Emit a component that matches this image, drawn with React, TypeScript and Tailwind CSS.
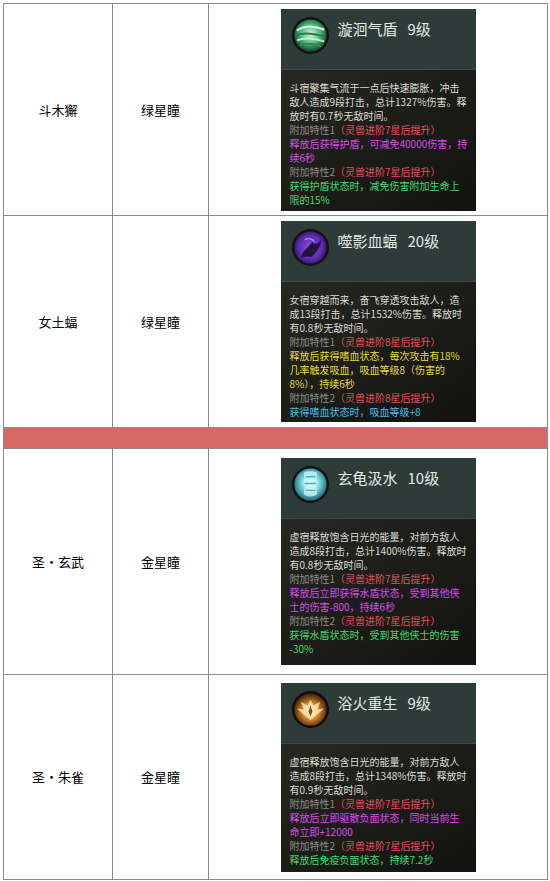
type Seg = [string, string];

const C = {
  txt: "text-[#dcdcd2]",
  lab: "text-[#8e8e84]",
  red: "text-[#e4505e]",
  mag: "text-[#d84ae8]",
  grn: "text-[#3fda6a]",
  yel: "text-[#e8d838]",
  cyn: "text-[#45bbe8]",
};

function SwirlIcon() {
  return (
    <svg width="39" height="39" viewBox="0 0 40 40">
      <defs>
        <radialGradient id="g1" cx="50%" cy="45%" r="55%">
          <stop offset="0%" stopColor="#d6f8e4" />
          <stop offset="55%" stopColor="#4bb878" />
          <stop offset="100%" stopColor="#134528" />
        </radialGradient>
      </defs>
      <circle cx="20" cy="20" r="19" fill="#0d1412" />
      <circle cx="20" cy="20" r="16.5" fill="url(#g1)" />
      <path d="M6 15 C14 9 26 11 34 14" stroke="#eafff2" strokeWidth="2.4" fill="none" opacity="0.85" />
      <path d="M5 20 C14 16 26 19 35 21" stroke="#2a7c4a" strokeWidth="2" fill="none" />
      <path d="M6 25 C15 21 25 24 34 26" stroke="#d8f8e6" strokeWidth="2" fill="none" opacity="0.8" />
      <path d="M9 30 C17 27 24 29 31 31" stroke="#2f8a55" strokeWidth="2" fill="none" />
    </svg>
  );
}

function BatIcon() {
  return (
    <svg width="39" height="39" viewBox="0 0 40 40">
      <defs>
        <radialGradient id="g2" cx="50%" cy="50%" r="55%">
          <stop offset="0%" stopColor="#8a55e0" />
          <stop offset="70%" stopColor="#5a2aa8" />
          <stop offset="100%" stopColor="#2a1055" />
        </radialGradient>
      </defs>
      <circle cx="20" cy="20" r="19" fill="#141016" />
      <circle cx="20" cy="20" r="16.5" fill="url(#g2)" />
      <path d="M10 30 C13 22 18 20 22 14 C24 18 28 16 31 12 C30 20 26 26 20 30 C17 28 13 31 10 30 Z" fill="#24123f" />
      <path d="M14 12 C18 10 22 11 24 14" stroke="#c7a8ff" strokeWidth="1.5" fill="none" opacity="0.7" />
    </svg>
  );
}

function WaterIcon() {
  return (
    <svg width="39" height="39" viewBox="0 0 40 40">
      <defs>
        <radialGradient id="g3" cx="50%" cy="45%" r="55%">
          <stop offset="0%" stopColor="#e8ffff" />
          <stop offset="50%" stopColor="#7fd8e0" />
          <stop offset="100%" stopColor="#1f6a78" />
        </radialGradient>
      </defs>
      <circle cx="20" cy="20" r="19" fill="#0c1416" />
      <circle cx="20" cy="20" r="16.5" fill="url(#g3)" />
      <path d="M13 8 C16 6 24 6 27 8 L26 14 C28 16 28 20 26 22 L27 30 C22 33 17 33 13 30 L14 22 C12 20 12 16 14 14 Z" fill="#c9f6f6" opacity="0.75" />
      <path d="M15 12 L25 12 M14 19 L26 19 M15 26 L25 26" stroke="#4fb0bd" strokeWidth="1.4" />
    </svg>
  );
}

function PhoenixIcon() {
  return (
    <svg width="39" height="39" viewBox="0 0 40 40">
      <defs>
        <radialGradient id="g4" cx="50%" cy="55%" r="55%">
          <stop offset="0%" stopColor="#ffe7a8" />
          <stop offset="45%" stopColor="#d98a2e" />
          <stop offset="100%" stopColor="#3a1c0a" />
        </radialGradient>
      </defs>
      <circle cx="20" cy="20" r="19" fill="#120c08" />
      <circle cx="20" cy="20" r="16.5" fill="url(#g4)" />
      <path d="M20 10 L23 16 L30 12 L27 20 L34 19 L27 25 L20 31 L13 25 L6 19 L13 20 L10 12 L17 16 Z" fill="#fff0c0" opacity="0.75" />
      <path d="M20 16 L22 22 L20 27 L18 22 Z" fill="#8a4a15" />
    </svg>
  );
}

type Card = {
  icon: React.ReactNode;
  title: string;
  level: string;
  lines: Seg[][];
  h: number;
};

type RowData = { name: string; kind: string; h: number; card: Card };

const rows: RowData[] = [
  {
    name: "斗木獬",
    kind: "绿星瞳",
    h: 212,
    card: {
      icon: <SwirlIcon />,
      title: "漩洄气盾",
      level: "9级",
      h: 202,
      lines: [
        [["斗宿聚集气流于一点后快速膨胀，冲击", C.txt]],
        [["敌人造成9段打击，总计1327%伤害。释", C.txt]],
        [["放时有0.7秒无敌时间。", C.txt]],
        [["附加特性1", C.lab], ["（灵兽进阶7星后提升）", C.red]],
        [["释放后获得护盾，可减免40000伤害，持", C.mag]],
        [["续6秒", C.mag]],
        [["附加特性2", C.lab], ["（灵兽进阶7星后提升）", C.red]],
        [["获得护盾状态时，减免伤害附加生命上", C.grn]],
        [["限的15%", C.grn]],
      ],
    },
  },
  {
    name: "女土蝠",
    kind: "绿星瞳",
    h: 212,
    card: {
      icon: <BatIcon />,
      title: "噬影血蝠",
      level: "20级",
      h: 201,
      lines: [
        [["女宿穿越而来，奋飞穿透攻击敌人，造", C.txt]],
        [["成13段打击，总计1532%伤害。释放时", C.txt]],
        [["有0.8秒无敌时间。", C.txt]],
        [["附加特性1", C.lab], ["（灵兽进阶8星后提升）", C.red]],
        [["释放后获得嗜血状态，每次攻击有18%", C.yel]],
        [["几率触发吸血，吸血等级8（伤害的", C.yel]],
        [["8%），持续6秒", C.yel]],
        [["附加特性2", C.lab], ["（灵兽进阶8星后提升）", C.red]],
        [["获得嗜血状态时，吸血等级+8", C.cyn]],
      ],
    },
  },
];

const rows2: RowData[] = [
  {
    name: "圣・玄武",
    kind: "金星瞳",
    h: 226,
    card: {
      icon: <WaterIcon />,
      title: "玄龟汲水",
      level: "10级",
      h: 207,
      lines: [
        [["虚宿释放饱含日光的能量，对前方敌人", C.txt]],
        [["造成8段打击，总计1400%伤害。释放时", C.txt]],
        [["有0.8秒无敌时间。", C.txt]],
        [["附加特性1", C.lab], ["（灵兽进阶7星后提升）", C.red]],
        [["释放后立即获得水盾状态，受到其他侠", C.mag]],
        [["士的伤害-800，持续6秒", C.mag]],
        [["附加特性2", C.lab], ["（灵兽进阶7星后提升）", C.red]],
        [["获得水盾状态时，受到其他侠士的伤害", C.grn]],
        [["-30%", C.grn]],
      ],
    },
  },
  {
    name: "圣・朱雀",
    kind: "金星瞳",
    h: 205,
    card: {
      icon: <PhoenixIcon />,
      title: "浴火重生",
      level: "9级",
      h: 189,
      lines: [
        [["虚宿释放饱含日光的能量，对前方敌人", C.txt]],
        [["造成8段打击，总计1348%伤害。释放时", C.txt]],
        [["有0.9秒无敌时间。", C.txt]],
        [["附加特性1", C.lab], ["（灵兽进阶7星后提升）", C.red]],
        [["释放后立即驱散负面状态，同时当前生", C.mag]],
        [["命立即+12000", C.mag]],
        [["附加特性2", C.lab], ["（灵兽进阶7星后提升）", C.red]],
        [["释放后免疫负面状态，持续7.2秒", C.grn]],
      ],
    },
  },
];

function SkillCard({ card }: { card: Card }) {
  return (
    <div
      className="w-[195px] flex flex-col overflow-hidden bg-[#1b1c18]"
      style={{ height: card.h }}
    >
      <div className="h-[61px] shrink-0 bg-[#2d3c39] flex items-start gap-[8px] pl-[10px] pt-[7px] border-b border-[#3c4d49]">
        <div className="shrink-0">{card.icon}</div>
        <div className="pt-[3px] text-[15px] leading-[20px] text-[#e3e8e4] whitespace-nowrap">
          {card.title}
          <span className="ml-[10px]">{card.level}</span>
        </div>
      </div>
      <div className="flex-1 bg-gradient-to-br from-[#272823] via-[#1c1d19] to-[#121310] pl-[9px] pr-[3px] pt-[11px]">
        {card.lines.map((line, i) => (
          <div key={i} className="whitespace-nowrap text-[10px] leading-[14px]">
            {line.map(([t, c], j) => (
              <span key={j} className={c}>
                {t}
              </span>
            ))}
          </div>
        ))}
      </div>
    </div>
  );
}

function Row({ r }: { r: RowData }) {
  return (
    <tr style={{ height: r.h }}>
      <td className="border border-[#8a8a8a] text-center align-middle text-[13px] text-black">{r.name}</td>
      <td className="border border-[#8a8a8a] text-center align-middle text-[13px] text-black">{r.kind}</td>
      <td className="border border-[#8a8a8a] align-middle">
        <div className="flex justify-center">
          <SkillCard card={r.card} />
        </div>
      </td>
    </tr>
  );
}

export default function App() {
  return (
    <div
      className="w-[550px] h-[881px] bg-white pt-[3px] pl-[3px]"
      style={{ fontFamily: '"Noto Sans CJK SC", "Noto Sans", sans-serif' }}
    >
      <table className="border-collapse w-[545px] table-fixed">
        <colgroup>
          <col className="w-[109px]" />
          <col className="w-[96px]" />
          <col />
        </colgroup>
        <tbody>
          {rows.map((r) => (
            <Row key={r.name} r={r} />
          ))}
          <tr className="h-[21px]">
            <td colSpan={3} className="border border-[#8a8a8a] bg-[#d76866]" />
          </tr>
          {rows2.map((r) => (
            <Row key={r.name} r={r} />
          ))}
        </tbody>
      </table>
    </div>
  );
}
